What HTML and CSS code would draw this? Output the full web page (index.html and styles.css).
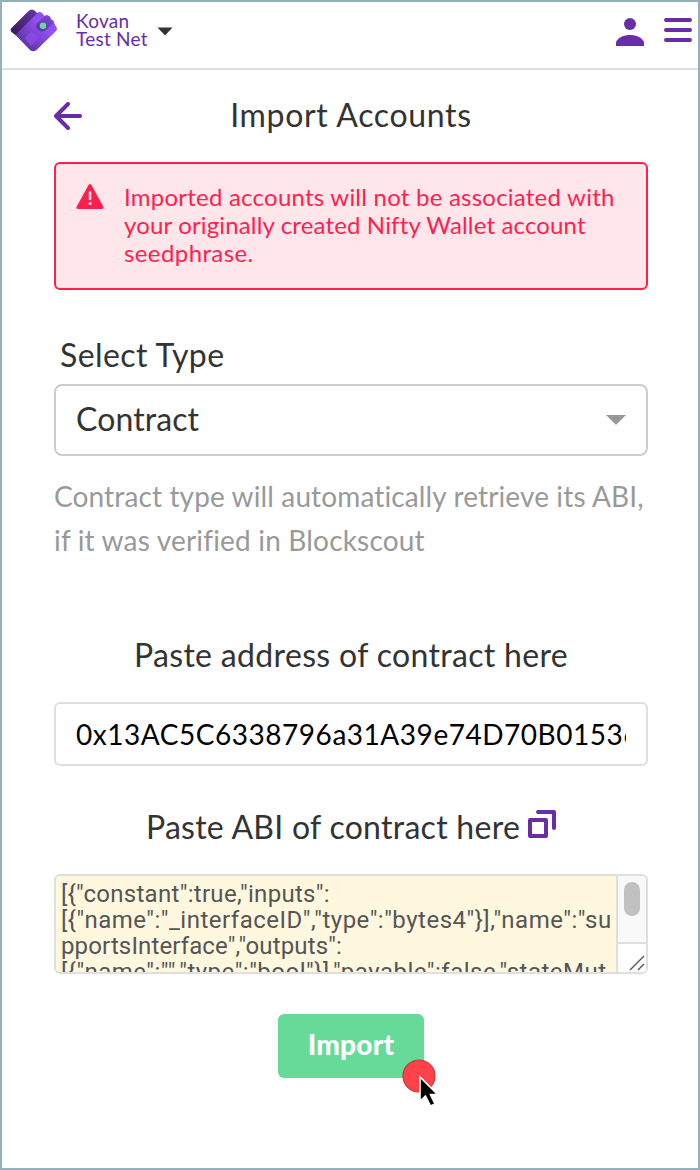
FILE: index.html
```html
<!DOCTYPE html>
<html lang="en">
<head>
<meta charset="utf-8">
<title>Import Accounts</title>
<link rel="stylesheet" href="styles.css">
</head>
<body>
<div class="wallet">
  <header class="topbar">
    <svg class="logo" width="48" height="44" viewBox="0 0 48 44">
      <defs>
        <linearGradient id="dark" x1="0" y1="1" x2="1" y2="0"><stop offset="0" stop-color="#341b55"/><stop offset="1" stop-color="#6937aa"/></linearGradient>
        <linearGradient id="face" x1="0" y1="1" x2="1" y2="0"><stop offset=".1" stop-color="#56309a"/><stop offset=".65" stop-color="#9150f4"/></linearGradient>
        <linearGradient id="flap" x1="0" y1="0" x2="1" y2="1"><stop offset="0" stop-color="#8a4be6"/><stop offset="1" stop-color="#8146dc"/></linearGradient>
        <linearGradient id="clasp" x1="0" y1="1" x2="1" y2="0"><stop offset="0" stop-color="#56309a"/><stop offset="1" stop-color="#8549e0"/></linearGradient>
      </defs>
      <path d="M1.500 19 18.500 2Q21.500-.8 24.500 1.500L28 5 6 26.500 1.500 23Q-.3 21 1.500 19Z" fill="url(#dark)"/>
      <path d="M5.500 26 27 4.500Q29.500 2 32 4L34.500 7Q37.500 5 40 8L41 10.500Q44 10.500 44 14L46 17.500Q48 20 46 22L26.500 41Q23.500 43.500 20 41Z" fill="url(#face)"/>
      <path d="M27 14.500 35 7Q38 5 40 8L41 10.500 44 13.500 36 21Q32 24 28.500 21 24.500 18 27 14.500Z" fill="url(#clasp)"/>
      <path d="M15 29 20.500 23.700Q22 22.500 23.500 23.700L27.500 27.500Q28.500 29 27.500 30.500L21 37Z" fill="url(#flap)"/>
      <circle cx="33" cy="16.700" r="3.200" fill="#65da9c"/>
    </svg>
    <div class="network"><span class="net-a">Kovan</span><span class="net-b">Test Net</span></div>
    <svg class="caret" width="16" height="9" viewBox="0 0 16 9"><path d="M.5.5h15L8 8.500Z" fill="#333"/></svg>
    <svg class="user" width="28" height="28" viewBox="0 0 28 28" fill="#682da7"><circle cx="14" cy="6" r="6"/><path d="M0 28V24C2 19.500 8 17 14 17S26 19.500 28 24V28Z"/></svg>
    <svg class="menu" width="28" height="24" viewBox="0 0 28 24" stroke="#682da7" stroke-width="4" stroke-linecap="round"><path d="M2 2H26M2 12H26M2 22H26"/></svg>
  </header>
  <main class="content">
    <div class="title-row">
      <svg class="back" width="28" height="28" viewBox="0 0 28 28" fill="none" stroke="#682da7" stroke-width="4" stroke-linecap="round" stroke-linejoin="round"><path d="M26 14H2M14 2 2 14 14 26"/></svg>
      <h1 class="title">Import Accounts</h1>
    </div>
    <div class="alert">
      <svg class="warning" width="28" height="25" viewBox="0 0 28 25"><path d="M12.500 1Q14-.8 15.500 1L27.500 23Q28.200 25 26 25H2Q-.2 25 .5 23Z" fill="#ff1f4f"/><path d="M14 8.500V15" stroke="#ffe6eb" stroke-width="2.600" stroke-linecap="round"/><circle cx="14" cy="19.500" r="1.600" fill="#ffe6eb"/></svg>
      <p class="alert-text"><span class="al-a">Imported accounts will not be associated with</span><span class="al-b">your originally created Nifty Wallet account</span><span class="al-c">seedphrase.</span></p>
    </div>
    <div class="label">Select Type</div>
    <div class="select"><span class="select-value">Contract</span><svg width="20" height="10" viewBox="0 0 20 10"><path d="M0 0H20L10 10Z" fill="#999"/></svg></div>
    <p class="help"><span class="help-a">Contract type will automatically retrieve its ABI,</span><span class="help-b">if it was verified in Blockscout</span></p>
    <div class="address-label">Paste address of contract here</div>
    <div class="address"><div class="address-value">0x13AC5C6338796a31A39e74D70B01536</div></div>
    <div class="abi-label"><span>Paste ABI of contract here</span>
      <svg width="28" height="28" viewBox="0 0 28 28" fill="none" stroke="#682da7" stroke-width="4" stroke-linejoin="round" stroke-linecap="round"><path d="M2 10H18V26H2ZM10 2H26V18"/></svg>
    </div>
    <div class="abi">
      <div class="abi-text"><span class="abi-a">[{"constant":true,"inputs":</span><span class="abi-b">[{"name":"_interfaceID","type":"bytes4"}],"name":"su</span><span class="abi-c">pportsInterface","outputs":</span><span class="abi-d">[{"name":"","type":"bool"}],"payable":false,"stateMut</span></div>
      <div class="scroll"><div class="track"><div class="thumb"></div></div><svg class="grip" width="28" height="30" viewBox="0 0 28 30" stroke="#555" stroke-width="1.400"><path d="M12 26 26 12M20 26 26 20"/></svg></div>
    </div>
    <div class="actions">
      <div class="import"><span>Import</span>
        <svg class="pointer" width="38" height="50" viewBox="0 0 38 50"><circle cx="17" cy="17" r="16" fill="#ff4248" stroke="#c8373c" stroke-width="1.200"/><path d="M18 18V42L23.500 37 28.500 47 33 45 28.500 35.500H35.500Z" fill="#000" stroke="#fff" stroke-width="1.600"/></svg>
      </div>
    </div>
  </main>
</div>
</body>
</html>
```
FILE: styles.css
```css
* { box-sizing: border-box; }
body { margin: 0; background: #fff; font-family: Lato, "Open Sans", sans-serif; color: #333; }
.wallet { width: 700px; height: 1170px; border: 2px solid #94b0bd; overflow: hidden; }
.topbar { height: 68px; border-bottom: 2px solid #dfdfdf; display: flex; align-items: flex-start; padding: 7px 6px 0 8px; }
.logo { flex: none; }
.network { margin: 3px 0 0 18px; width: 74px; font-size: 19px; line-height: 18px; color: #682da7; }
.network span, .alert-text span, .help span, .abi-text span { display: block; white-space: nowrap; }
.net-a { letter-spacing: .3px; }
.net-b { letter-spacing: .25px; }
.caret { margin: 18px 0 0 7px; }
.user { margin: 9px 0 0 auto; }
.menu { margin: 9px 0 0 20px; }
.content { padding: 0 50px 0 52px; }
.title-row { height: 92px; padding-top: 32px; display: flex; align-items: flex-start; }
.title { margin: -8px 28px 0 0; flex: 1; text-align: center; font-weight: 400; font-size: 32px; line-height: 42px; letter-spacing: .67px; color: #333; }
.alert { height: 128px; border: 2px solid #ff1f4f; border-radius: 6px; background: #ffe6eb; padding: 20px; display: flex; gap: 20px; color: #ff1f4f; }
.warning { flex: none; }
.alert-text { margin: -1px 0 0; font-size: 24px; line-height: 28px; }
.al-a { letter-spacing: .23px; }
.al-b { letter-spacing: .15px; }
.al-c { letter-spacing: .4px; }
.label { margin: 44px 0 0 6px; font-size: 32px; line-height: 42px; height: 50px; letter-spacing: .4px; }
.select { height: 72px; border: 2px solid #ccc; border-radius: 8px; padding: 0 20px; display: flex; align-items: center; justify-content: space-between; font-size: 32px; letter-spacing: .1px; }
.select-value { padding-bottom: 3px; }
.help { margin: 18px 0 0; font-size: 28px; line-height: 44px; color: #999; }
.help-a { letter-spacing: .13px; }
.help-b { letter-spacing: .18px; }
.address-label { margin-top: 72px; height: 64px; text-align: center; font-size: 32px; line-height: 42px; letter-spacing: .33px; white-space: nowrap; }
.address { margin-top: 4px; height: 64px; border: 2px solid #dfdfdf; border-radius: 6px; padding: 0 20px; }
.address-value { overflow: hidden; white-space: nowrap; color: #000; font-size: 28px; line-height: 60px; letter-spacing: .53px; }
.abi-label { margin-top: 40px; height: 68px; display: flex; justify-content: center; gap: 8px; font-size: 32px; line-height: 42px; white-space: nowrap; letter-spacing: .27px; }
.abi-label svg { margin-top: 4px; flex: none; }
.abi { height: 100px; border: 2px solid #dfdfdf; border-radius: 6px; background: #fff8df; display: flex; overflow: hidden; }
.abi-text { flex: 1; padding: 5px 0 0 5px; overflow: hidden; font-family: Roboto, sans-serif; font-size: 24px; line-height: 26px; color: #555; }
.abi-a { letter-spacing: .3px; }
.abi-b { letter-spacing: .5px; }
.abi-c { letter-spacing: .13px; }
.abi-d { letter-spacing: .5px; }
.scroll { flex: none; width: 30px; border-left: 2px solid #dfdfdf; background: #fff; }
.track { height: 68px; border-bottom: 2px solid #dfdfdf; background: #f9f9f9; padding: 6px 0 0 6px; }
.thumb { width: 16px; height: 34px; border-radius: 8px; background: #c1c1c1; }
.grip { display: block; }
.actions { margin-top: 40px; display: flex; justify-content: center; }
.import { position: relative; width: 146px; height: 64px; border-radius: 6px; background: #66db99; color: #fff; font-size: 28px; line-height: 60px; font-weight: 900; letter-spacing: .2px; text-align: center; }
.pointer { position: absolute; left: 124px; top: 45px; }
```
